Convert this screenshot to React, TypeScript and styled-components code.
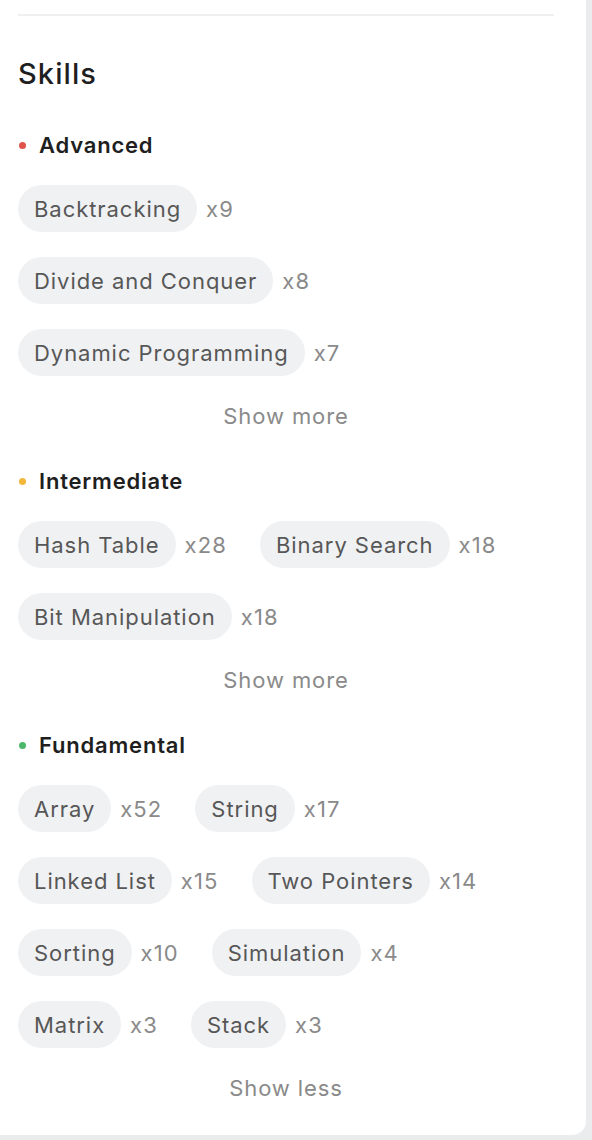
import React from 'react'
import styled, { createGlobalStyle } from 'styled-components'

const GlobalStyle = createGlobalStyle`
  html, body {
    margin: 0;
    padding: 0;
    background: #ebecee;
  }
  body {
    font-family: Inter, 'Noto Sans', 'Liberation Sans', sans-serif;
    -webkit-font-smoothing: antialiased;
  }
`

const Page = styled.div`
  width: 592px;
  height: 1140px;
  overflow: hidden;
`

const Card = styled.section`
  width: 586px;
  box-sizing: border-box;
  background: #ffffff;
  border-radius: 0 0 14px 0;
  padding: 14px 32px 32px 18px;
`

const Divider = styled.hr`
  margin: 0;
  border: none;
  height: 2px;
  background: #f0f0f1;
`

const Title = styled.h2`
  margin: 37px 0 0;
  font-size: 29px;
  line-height: 42px;
  font-weight: 500;
  color: #1f1f1f;
  letter-spacing: 1.1px;
`

const Level = styled.div`
  margin-top: 35px;
`

const LevelHeader = styled.div<{ $dot: string }>`
  display: flex;
  align-items: center;
  height: 30px;
  font-size: 22px;
  font-weight: 600;
  letter-spacing: 0.8px;
  color: #1f1f1f;

  &::before {
    content: '';
    width: 7px;
    height: 7px;
    border-radius: 50%;
    background: ${p => p.$dot};
    margin: 0 13px 0 1px;
  }
`

const TagList = styled.div`
  display: flex;
  flex-wrap: wrap;
  row-gap: 25px;
  column-gap: 33px;
  margin-top: 25px;
`

const Tag = styled.div`
  display: flex;
  align-items: center;
`

const Chip = styled.span`
  display: inline-flex;
  align-items: center;
  height: 47px;
  padding: 0 16px;
  border-radius: 24px;
  background: #f0f1f3;
  color: #575757;
  font-size: 22px;
  letter-spacing: 0.95px;
`

const Count = styled.span`
  margin-left: 9px;
  font-size: 22px;
  letter-spacing: 1.1px;
  color: #8a8a8a;
`

const Toggle = styled.button`
  display: block;
  width: 100%;
  margin-top: 25px;
  height: 30px;
  padding: 0;
  border: none;
  background: none;
  font-family: inherit;
  font-size: 22px;
  letter-spacing: 0.9px;
  color: #8a8a8a;
  text-align: center;
  cursor: pointer;
`

interface Skill {
  name: string
  count: number
}

interface Group {
  label: string
  color: string
  skills: Skill[]
  toggle: string
}

const groups: Group[] = [
  {
    label: 'Advanced',
    color: '#e0534a',
    toggle: 'Show more',
    skills: [
      { name: 'Backtracking', count: 9 },
      { name: 'Divide and Conquer', count: 8 },
      { name: 'Dynamic Programming', count: 7 },
    ],
  },
  {
    label: 'Intermediate',
    color: '#f5b63c',
    toggle: 'Show more',
    skills: [
      { name: 'Hash Table', count: 28 },
      { name: 'Binary Search', count: 18 },
      { name: 'Bit Manipulation', count: 18 },
    ],
  },
  {
    label: 'Fundamental',
    color: '#4cb86b',
    toggle: 'Show less',
    skills: [
      { name: 'Array', count: 52 },
      { name: 'String', count: 17 },
      { name: 'Linked List', count: 15 },
      { name: 'Two Pointers', count: 14 },
      { name: 'Sorting', count: 10 },
      { name: 'Simulation', count: 4 },
      { name: 'Matrix', count: 3 },
      { name: 'Stack', count: 3 },
    ],
  },
]

const App: React.FC = () => {
  return (
    <Page>
      <GlobalStyle />
      <Card>
        <Divider />
        <Title>Skills</Title>
        {groups.map(g => (
          <Level key={g.label}>
            <LevelHeader $dot={g.color}>{g.label}</LevelHeader>
            <TagList>
              {g.skills.map(s => (
                <Tag key={s.name}>
                  <Chip>{s.name}</Chip>
                  <Count>x{s.count}</Count>
                </Tag>
              ))}
            </TagList>
            <Toggle type='button'>{g.toggle}</Toggle>
          </Level>
        ))}
      </Card>
    </Page>
  )
}

export default App
